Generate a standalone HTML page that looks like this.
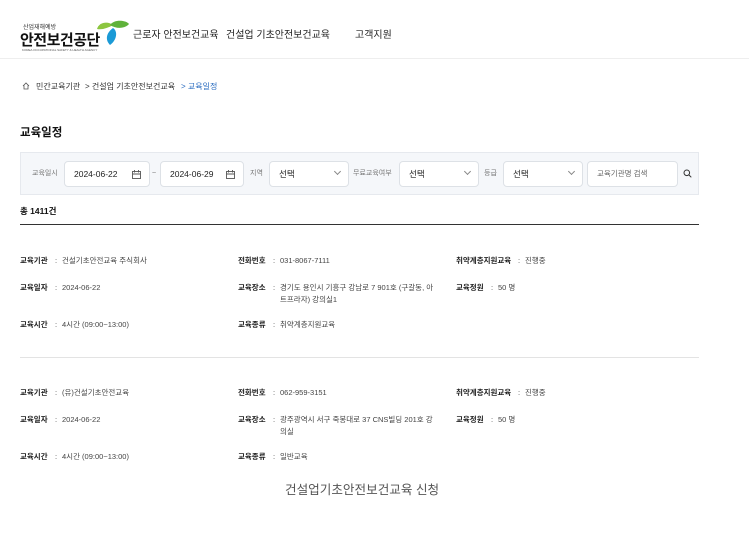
<!DOCTYPE html>
<html><head><meta charset="utf-8"><style>
*{margin:0;padding:0;box-sizing:border-box}
body{width:749px;height:533px;background:#fff;font-family:"Liberation Sans","Noto Sans CJK KR",sans-serif;color:#222;position:relative;overflow:hidden}
.a{position:absolute;white-space:nowrap}
.hdr{position:absolute;left:0;top:0;width:749px;height:59px;border-bottom:1px solid #eee}
.nav{font-size:10px;color:#222;top:26px}
.bc{font-size:8px;top:81px;color:#333}
.fbox{position:absolute;left:20px;top:152px;width:679px;height:43px;background:#f5f7fa;border:1px solid #e6e9ee}
.in{position:absolute;top:8px;height:26px;background:#fff;border:1px solid #dde1e6;border-radius:4px;font-size:8.5px;line-height:24px;padding-left:9px;color:#222}
.lb{position:absolute;top:8px;line-height:26px;font-size:7px;color:#777}
.chev{position:absolute;right:8px;top:7px;width:5px;height:5px;border-right:1px solid #888;border-bottom:1px solid #888;transform:rotate(45deg)}
.r{font-size:7.5px;color:#444}
.r b{font-weight:bold;color:#222;display:inline-block;width:35px}
.r i{font-style:normal;display:inline-block;width:7px}
</style></head><body>
<div class="hdr"></div>
<div class="a" style="left:23px;top:22px;font-size:6px;color:#333">산업재해예방</div>
<div class="a" style="left:20px;top:29px;font-size:15px;font-weight:bold;color:#111;letter-spacing:-0.5px">안전보건공단</div>
<div class="a" style="left:22px;top:48px;font-size:3px;color:#555">KOREA OCCUPATIONAL SAFETY &amp; HEALTH AGENCY</div>
<svg class="a" style="left:96px;top:20px" width="34" height="26" viewBox="0 0 34 26">
<path d="M1 9 C3 2 12 1 17 5 C12 8 6 10 1 9Z" fill="#8cc63f"/>
<path d="M14 5 C18 -1 30 0 33 4 C29 9 20 9 14 5Z" fill="#5fb23a"/>
<path d="M17 8 C22 11 21 20 14 25 C9 20 10 13 17 8Z" fill="#1b9ad6"/>
</svg>
<div class="a nav" style="left:133px">근로자 안전보건교육</div>
<div class="a nav" style="left:226px">건설업 기초안전보건교육</div>
<div class="a nav" style="left:355px">고객지원</div>
<svg class="a" style="left:22px;top:82px" width="8" height="8" viewBox="0 0 8 8"><path d="M1 4 L4 1 L7 4 M2 3.5 V7 H6 V3.5" fill="none" stroke="#555" stroke-width="0.8"/></svg>
<div class="a bc" style="left:36px">민간교육기관</div>
<div class="a bc" style="left:85px">&gt; 건설업 기초안전보건교육</div>
<div class="a bc" style="left:181px;color:#2a6cc0">&gt; 교육일정</div>
<div class="a" style="left:20px;top:124px;font-size:11.5px;font-weight:bold;color:#111">교육일정</div>
<div class="fbox">
<div class="lb" style="left:11px">교육일시</div>
<div class="in" style="left:43px;width:86px">2024-06-22<svg style="position:absolute;right:8px;top:8px" width="9" height="9" viewBox="0 0 9 9"><rect x="0.5" y="1.5" width="8" height="7" fill="none" stroke="#555" stroke-width="0.9"/><path d="M0.5 4 H8.5 M2.5 0 V2.5 M6.5 0 V2.5" stroke="#555" stroke-width="0.9"/></svg></div>
<div class="lb" style="left:131px">~</div>
<div class="in" style="left:139px;width:84px">2024-06-29<svg style="position:absolute;right:8px;top:8px" width="9" height="9" viewBox="0 0 9 9"><rect x="0.5" y="1.5" width="8" height="7" fill="none" stroke="#555" stroke-width="0.9"/><path d="M0.5 4 H8.5 M2.5 0 V2.5 M6.5 0 V2.5" stroke="#555" stroke-width="0.9"/></svg></div>
<div class="lb" style="left:229px">지역</div>
<div class="in" style="left:248px;width:80px">선택<span class="chev"></span></div>
<div class="lb" style="left:332px">무료교육여부</div>
<div class="in" style="left:378px;width:80px">선택<span class="chev"></span></div>
<div class="lb" style="left:463px">등급</div>
<div class="in" style="left:482px;width:80px">선택<span class="chev"></span></div>
<div class="in" style="left:566px;width:91px;color:#666;font-size:7.5px">교육기관명 검색</div>
<svg style="position:absolute;left:662px;top:16px" width="9" height="9" viewBox="0 0 9 9"><circle cx="3.8" cy="3.8" r="2.8" fill="none" stroke="#333" stroke-width="1"/><path d="M6 6 L8.3 8.3" stroke="#333" stroke-width="1"/></svg>
</div>
<div class="a" style="left:20px;top:205px;font-size:8.5px;font-weight:bold;color:#111">총 1411건</div>
<div class="a" style="left:20px;top:224px;width:679px;height:1px;background:#333"></div>

<div class="a r" style="left:20px;top:255px"><b>교육기관</b><i>:</i>건설기초안전교육 주식회사</div>
<div class="a r" style="left:238px;top:255px"><b>전화번호</b><i>:</i>031-8067-7111</div>
<div class="a r" style="left:456px;top:255px"><b style="width:62px">취약계층지원교육</b><i>:</i>진행중</div>
<div class="a r" style="left:20px;top:282px"><b>교육일자</b><i>:</i>2024-06-22</div>
<div class="a r" style="left:238px;top:282px;line-height:12px"><b>교육장소</b><i>:</i>경기도 용인시 기흥구 강남로 7 901호 (구갈동, 아<br><span style="padding-left:42px">트프라자) 강의실1</span></div>
<div class="a r" style="left:456px;top:282px"><b>교육정원</b><i>:</i>50 명</div>
<div class="a r" style="left:20px;top:319px"><b>교육시간</b><i>:</i>4시간 (09:00~13:00)</div>
<div class="a r" style="left:238px;top:319px"><b>교육종류</b><i>:</i>취약계층지원교육</div>
<div class="a" style="left:20px;top:357px;width:679px;height:1px;background:#e3e3e3"></div>

<div class="a r" style="left:20px;top:387px"><b>교육기관</b><i>:</i>(유)건설기초안전교육</div>
<div class="a r" style="left:238px;top:387px"><b>전화번호</b><i>:</i>062-959-3151</div>
<div class="a r" style="left:456px;top:387px"><b style="width:62px">취약계층지원교육</b><i>:</i>진행중</div>
<div class="a r" style="left:20px;top:414px"><b>교육일자</b><i>:</i>2024-06-22</div>
<div class="a r" style="left:238px;top:414px;line-height:12px"><b>교육장소</b><i>:</i>광주광역시 서구 죽봉대로 37 CNS빌딩 201호 강<br><span style="padding-left:42px">의실</span></div>
<div class="a r" style="left:456px;top:414px"><b>교육정원</b><i>:</i>50 명</div>
<div class="a r" style="left:20px;top:451px"><b>교육시간</b><i>:</i>4시간 (09:00~13:00)</div>
<div class="a r" style="left:238px;top:451px"><b>교육종류</b><i>:</i>일반교육</div>
<div class="a" style="left:285px;top:479px;font-size:12.6px;color:#555">건설업기초안전보건교육 신청</div>
</body></html>
